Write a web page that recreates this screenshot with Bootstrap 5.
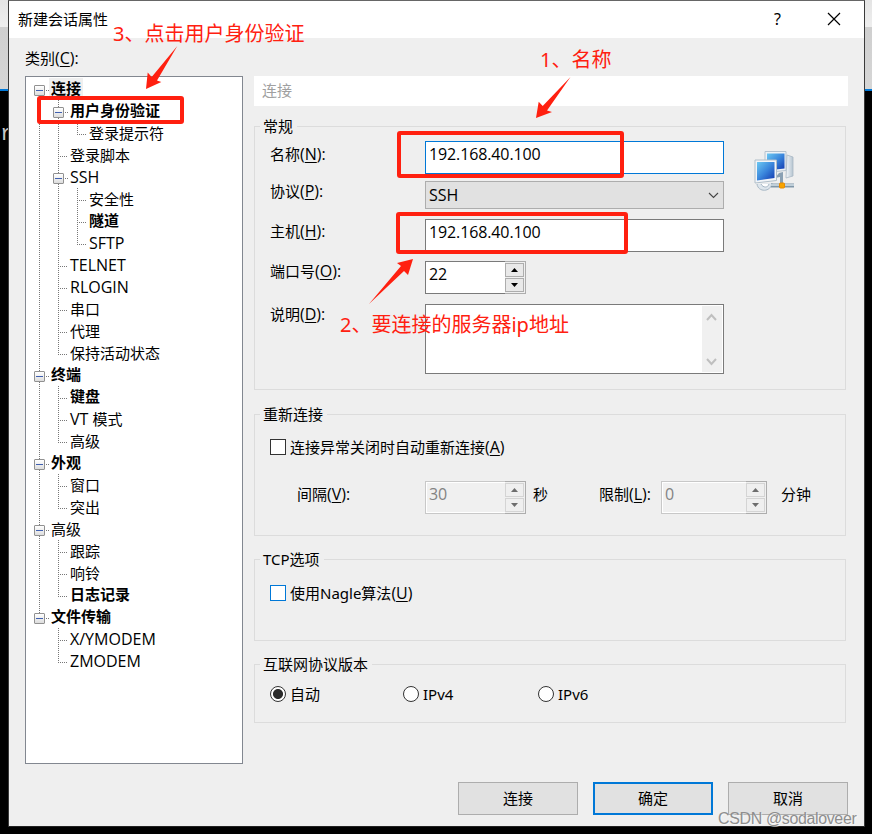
<!DOCTYPE html>
<html lang="zh-CN">
<head>
<meta charset="utf-8">
<title>新建会话属性</title>
<meta name="viewport" content="width=device-width, initial-scale=1">
<link href="https://cdn.jsdelivr.net/npm/bootstrap@5.3.0/dist/css/bootstrap.min.css" rel="stylesheet">
<style>
body{width:872px;height:834px;overflow:hidden;font:15px/20px "Noto Sans","Noto Sans CJK SC",sans-serif;color:#000;
 background:linear-gradient(#e4e4e4 0,#eee 27px,#cfcfcf 27px,#d6d6d6 89px,#0078d7 89px,#0078d7 91px,#000 91px)}
.term-char{left:0;top:125px;color:#c8c8c8;font:22px/20px "Liberation Mono",monospace}
.dlg{width:857px;height:827px;margin-left:8px;background:#efefef;border:1px solid #666;border-color:#666 #3a3a3a #222 #3a3a3a}
.titlebar{height:37px;padding:0 23px 2px 9px}
.help{margin-right:46px;font-size:16px}
.dlg-body{padding:10px 16px 0}
.side{width:218px}
.tree{height:688px;border:1px solid #828790;padding:1px 0 0 8px;margin-top:8px}
.tree-row{height:22px;line-height:22px;white-space:nowrap}
.tree-row b{font-weight:700;line-height:20px;height:20px}
.en{font-family:"Open Sans",sans-serif;font-size:16px;line-height:1}
.tree-row>.en{line-height:22px}
.g{width:19px;height:22px;flex:none;position:relative}
.g:last-of-type{width:17px}
.v,.t,.l,.x{--dots:repeating-linear-gradient(#777 0 1px,transparent 1px 2px);--hd:repeating-linear-gradient(90deg,#777 0 1px,transparent 1px 2px);background:var(--dots) 5px 0/1px 22px no-repeat}
.t{background:var(--dots) 5px 0/1px 22px no-repeat,var(--hd) 5px 12px/10px 1px no-repeat}
.l{background:var(--dots) 5px 0/1px 12px no-repeat,var(--hd) 5px 12px/10px 1px no-repeat}
.x{background:var(--dots) 5px 0/1px 22px no-repeat,var(--hd) 12px 12px/4px 1px no-repeat}
.x.first{background:var(--dots) 5px 12px/1px 10px no-repeat,var(--hd) 12px 12px/4px 1px no-repeat}
.x.end{background:var(--dots) 5px 0/1px 12px no-repeat,var(--hd) 12px 12px/4px 1px no-repeat}
.x i{display:block;position:relative;top:7px;width:11px;height:11px;border:1px solid #919191;border-radius:1px;
 background:linear-gradient(#4060b0,#4060b0) 1px 4px/7px 1px no-repeat,linear-gradient(#fff,#ddd)}
.sel{background:#efefef;padding:0 2px;margin-left:-2px}
.pane{width:594px;margin-top:28px;margin-left:11px}
.pane-title{height:30px;padding:4px 8px;color:#a0a0a0;margin-bottom:20px}
.group{width:592px;border:1px solid #dcdcdc;padding:0 15px}
.group-name{display:table;background:#efefef;padding:0 4px 0 3px;margin:-11px 0 0 -10px}
.g1{height:264px}.g2{height:122px;margin-top:24px}.g3{height:82px;margin-top:23px}.g4{height:59px;margin-top:23px}
.lbl{width:155px;flex:none}
.txt{width:299px;height:33px;border:1px solid #7a7a7a;background:#fff;padding:2px 3px;font-family:"Open Sans",sans-serif;font-size:16px;letter-spacing:-.12px}
.txt.on{border-color:#0078d7}
.combo{width:299px;height:28px;border:1px solid #adadad;background:#e1e1e1;padding:0 4px 0 3px}
.area{width:299px;height:70px;border:1px solid #7a7a7a;background:#fff;padding:1px}
.bar{width:20px;background:#f0f0f0;padding:7px 2px 6px 0}
.spin{height:33px;border:1px solid #7a7a7a;background:#fff}
.spin .num{flex:1;padding:2px 3px;font-family:"Open Sans",sans-serif;font-size:16px;letter-spacing:-.12px}
.steps{width:21px;margin:-1px -1px -1px 0;background:#f0f0f0;border:1px solid #adadad;border-left:0;padding:1px 0 0 0}
.step{height:14px;width:19px;border:1px solid #adadad;background:#e9e9e9}
.spin.off{border-color:#c8c8c8;background:#f0f0f0;color:#838383;box-shadow:inset 0 0 0 1px #fff}
.off .step{border-color:#d4d4d4;background:#efefef;color:#6d6d6d}
.box{width:16px;height:16px;border:1px solid #333;background:#fff;margin-right:4px;flex:none}
.box.hot{border-color:#0078d7}
.radio{width:16px;height:16px;border:1px solid #333;border-radius:50%;background:#fff;margin-right:4px;flex:none}
.radio.on{background:radial-gradient(circle,#2b2b2b 4.6px,#fff 5.4px)}
.push{width:120px;height:33px;border:1px solid #adadad;border-radius:0;background:#e1e1e1;font-size:15px;line-height:20px;padding:0 0 2px;color:#000}
.push.main{border:2px solid #0078d7}
.buttons{margin:18px 0 0;padding-left:433px;gap:15px}
.marks{left:0;top:0;pointer-events:none}
.marks text{font:20px "Noto Sans","Noto Sans CJK SC",sans-serif;fill:#ff2010}
.wm{left:718px;top:809px;font:16px/20px "Liberation Sans",sans-serif;letter-spacing:-.37px;color:#8e8e8e;text-shadow:1px 1px 0 #fff8;white-space:nowrap}
u{text-underline-offset:2px;text-decoration-thickness:1px}
</style>
<script src="https://cdn.jsdelivr.net/npm/bootstrap@5.3.0/dist/js/bootstrap.bundle.min.js"></script>
</head>
<body class="position-relative">
<span class="term-char position-absolute">r</span>
<div class="dlg position-relative">
  <header class="titlebar bg-white d-flex align-items-center">
    <span class="me-auto">新建会话属性</span>
    <span class="help">?</span>
    <svg width="14" height="14" viewBox="0 0 14 14"><path d="M1 1l12 12M13 1L1 13" stroke="#000" stroke-width="1.200"/></svg>
  </header>
  <div class="dlg-body">
    <div class="d-flex">
      <aside class="side">
        <div>类别<span class="en">(<u>C</u>):</span></div>
        <div class="tree bg-white">
          <div class="tree-row d-flex"><span class="g x first"><i></i></span><b class="sel">连接</b></div>
          <div class="tree-row d-flex"><span class="g v"></span><span class="g x"><i></i></span><b>用户身份验证</b></div>
          <div class="tree-row d-flex"><span class="g v"></span><span class="g v"></span><span class="g l"></span>登录提示符</div>
          <div class="tree-row d-flex"><span class="g v"></span><span class="g t"></span>登录脚本</div>
          <div class="tree-row d-flex"><span class="g v"></span><span class="g x"><i></i></span><div class="en">SSH</div></div>
          <div class="tree-row d-flex"><span class="g v"></span><span class="g v"></span><span class="g t"></span>安全性</div>
          <div class="tree-row d-flex"><span class="g v"></span><span class="g v"></span><span class="g t"></span><b>隧道</b></div>
          <div class="tree-row d-flex"><span class="g v"></span><span class="g v"></span><span class="g l"></span><div class="en">SFTP</div></div>
          <div class="tree-row d-flex"><span class="g v"></span><span class="g t"></span><div class="en">TELNET</div></div>
          <div class="tree-row d-flex"><span class="g v"></span><span class="g t"></span><div class="en">RLOGIN</div></div>
          <div class="tree-row d-flex"><span class="g v"></span><span class="g t"></span>串口</div>
          <div class="tree-row d-flex"><span class="g v"></span><span class="g t"></span>代理</div>
          <div class="tree-row d-flex"><span class="g v"></span><span class="g l"></span>保持活动状态</div>
          <div class="tree-row d-flex"><span class="g x"><i></i></span><b>终端</b></div>
          <div class="tree-row d-flex"><span class="g v"></span><span class="g t"></span><b>键盘</b></div>
          <div class="tree-row d-flex"><span class="g v"></span><span class="g t"></span><div><span class="en">VT </span>模式</div></div>
          <div class="tree-row d-flex"><span class="g v"></span><span class="g l"></span>高级</div>
          <div class="tree-row d-flex"><span class="g x"><i></i></span><b>外观</b></div>
          <div class="tree-row d-flex"><span class="g v"></span><span class="g t"></span>窗口</div>
          <div class="tree-row d-flex"><span class="g v"></span><span class="g l"></span>突出</div>
          <div class="tree-row d-flex"><span class="g x"><i></i></span>高级</div>
          <div class="tree-row d-flex"><span class="g v"></span><span class="g t"></span>跟踪</div>
          <div class="tree-row d-flex"><span class="g v"></span><span class="g t"></span>响铃</div>
          <div class="tree-row d-flex"><span class="g v"></span><span class="g l"></span><b>日志记录</b></div>
          <div class="tree-row d-flex"><span class="g x end"><i></i></span><b>文件传输</b></div>
          <div class="tree-row d-flex"><span class="g"></span><span class="g t"></span><div class="en">X/YMODEM</div></div>
          <div class="tree-row d-flex"><span class="g"></span><span class="g l"></span><div class="en">ZMODEM</div></div>
        </div>
      </aside>
      <main class="pane">
        <div class="pane-title bg-white">连接</div>
        <section class="group g1">
          <div class="group-name">常规</div>
          <div class="d-flex align-items-start">
            <div>
              <div class="d-flex" style="margin-top:5px"><div class="lbl" style="padding-top:3px">名称<span class="en">(<u>N</u>):</span></div><div class="txt on">192.168.40.100</div></div>
              <div class="d-flex" style="margin-top:7px"><div class="lbl">协议<span class="en">(<u>P</u>):</span></div><div class="combo d-flex align-items-center justify-content-between"><span class="en">SSH</span><svg width="11" height="7" viewBox="0 0 11 7"><path d="M1 1l4.500 4.500L10 1" fill="none" stroke="#444" stroke-width="1.100"/></svg></div></div>
              <div class="d-flex" style="margin-top:10px"><div class="lbl" style="padding-top:2px">主机<span class="en">(<u>H</u>):</span></div><div class="txt">192.168.40.100</div></div>
              <div class="d-flex" style="margin-top:9px"><div class="lbl">端口号<span class="en">(<u>O</u>):</span></div>
                <div class="spin d-flex" style="width:101px"><span class="num">22</span><div class="steps"><div class="step d-flex align-items-center justify-content-center"><svg width="7" height="4"><path d="M0 4L3.500 0L7 4z"/></svg></div><div class="step d-flex align-items-center justify-content-center" style="margin-top:1px"><svg width="7" height="4"><path d="M0 0L3.500 4L7 0z"/></svg></div></div></div></div>
              <div class="d-flex" style="margin-top:10px"><div class="lbl">说明<span class="en">(<u>D</u>):</span></div>
                <div class="area d-flex justify-content-end"><div class="bar d-flex flex-column justify-content-between align-items-center"><svg width="11" height="8"><path d="M1 7l4.500-5L10 7" fill="none" stroke="#bfbfbf" stroke-width="2"/></svg><svg width="11" height="8"><path d="M1 1l4.500 5L10 1" fill="none" stroke="#bfbfbf" stroke-width="2"/></svg></div></div></div>
            </div>
            <svg width="42" height="42" viewBox="0 0 42 42" style="margin:14px 0 0 29px">
              <defs><linearGradient id="scr" x1="0" y1="0" x2="1" y2="1"><stop offset="0" stop-color="#6cc8f2"/><stop offset=".5" stop-color="#3a86dc"/><stop offset="1" stop-color="#1238ae"/></linearGradient>
              <linearGradient id="cas" x1="0" y1="0" x2="1" y2="0"><stop offset="0" stop-color="#f4f7fa"/><stop offset="1" stop-color="#b5c4d0"/></linearGradient></defs>
              <path d="M34 5l6 2v19l-7 2z" fill="url(#cas)" stroke="#a9b8c4" stroke-width=".8"/>
              <path d="M12 1.500h21v19l-21 2z" fill="#eef2f6" stroke="#b5c2ce"/><path d="M14 3.500h17.500v15l-17.500 2z" fill="url(#scr)"/>
              <path d="M4 34c1 8.500 14 8.500 15-1" fill="#dde5ec" stroke="#a5b6c4"/><path d="M8 34c2 4 7 4 8 0" fill="#fff" stroke="#a5b6c4"/>
              <path d="M26 23l4-1v11h-3v-6l-5 1z" fill="#8aa0b3"/><path d="M18 35.500h23" stroke="#8097a9" stroke-width="4"/><path d="M18 35h23" stroke="#dce7ee" stroke-width="1.400"/>
              <path d="M2 10h21.500v20.500L2 33z" fill="#f2f5f8" stroke="#b0bec9"/><path d="M4 12h17.500v16L4 30.500z" fill="url(#scr)"/>
              <rect x="26.500" y="33" width="5" height="5" rx="1" fill="#f7a400" stroke="#e98a00"/>
            </svg>
          </div>
        </section>
        <section class="group g2">
          <div class="group-name">重新连接</div>
          <div class="d-flex align-items-center" style="margin-top:13px"><span class="box"></span><span>连接异常关闭时自动重新连接<span class="en">(<u>A</u>)</span></span></div>
          <div class="d-flex" style="margin-top:24px;padding-left:27px">
            <div style="width:128px;padding-top:3px">间隔<span class="en">(<u>V</u>):</span></div>
            <div class="spin off d-flex" style="width:101px"><span class="num">30</span><div class="steps"><div class="step d-flex align-items-center justify-content-center"><svg width="7" height="4"><path d="M0 4L3.500 0L7 4z" fill="currentColor"/></svg></div><div class="step d-flex align-items-center justify-content-center" style="margin-top:1px"><svg width="7" height="4"><path d="M0 0L3.500 4L7 0z" fill="currentColor"/></svg></div></div></div>
            <div style="width:73px;padding:3px 0 0 7px">秒</div>
            <div style="width:62px;padding-top:3px">限制<span class="en">(<u>L</u>):</span></div>
            <div class="spin off d-flex" style="width:106px"><span class="num">0</span><div class="steps"><div class="step d-flex align-items-center justify-content-center"><svg width="7" height="4"><path d="M0 4L3.500 0L7 4z" fill="currentColor"/></svg></div><div class="step d-flex align-items-center justify-content-center" style="margin-top:1px"><svg width="7" height="4"><path d="M0 0L3.500 4L7 0z" fill="currentColor"/></svg></div></div></div>
            <div style="padding:3px 0 0 14px">分钟</div>
          </div>
        </section>
        <section class="group g3">
          <div class="group-name">TCP选项</div>
          <div class="d-flex align-items-center" style="margin-top:14px"><span class="box hot"></span><span>使用Nagle算法<span class="en">(<u>U</u>)</span></span></div>
        </section>
        <section class="group g4">
          <div class="group-name">互联网协议版本</div>
          <div class="d-flex" style="margin-top:10px">
            <div class="d-flex align-items-center" style="width:133px"><span class="radio on"></span>自动</div>
            <div class="d-flex align-items-center" style="width:135px"><span class="radio"></span>IPv4</div>
            <div class="d-flex align-items-center"><span class="radio"></span>IPv6</div>
          </div>
        </section>
      </main>
    </div>
    <div class="buttons d-flex">
      <button class="btn push">连接</button><button class="btn push main">确定</button><button class="btn push">取消</button>
    </div>
  </div>
</div>
<svg class="marks position-absolute" width="872" height="834">
  <g fill="none" stroke="#ff2010" stroke-width="4" stroke-linejoin="round">
    <rect x="39" y="98" width="143" height="24" rx="1"/><rect x="399" y="133" width="223" height="43" rx="1"/><rect x="398" y="214" width="228" height="38" rx="1"/>
  </g>
  <g fill="#ff2010">
    <path d="M146 89l1.700-16.500 4 4.500L177.300 46 157 80.500l4.300 1.500z"/>
    <path d="M536 118l2.700-16.300 4 4.300L570.500 77 547 110.500l5 1.500z"/>
    <path d="M413 259l-5 16-4-4L369 304l32-38-4-3z"/>
  </g>
  <text x="113" y="41">3、点击用户身份验证</text>
  <text x="540" y="67">1、名称</text>
  <text x="340" y="332">2、要连接的服务器ip地址</text>
</svg>
<span class="wm position-absolute">CSDN @sodaloveer</span>
</body>
</html>
